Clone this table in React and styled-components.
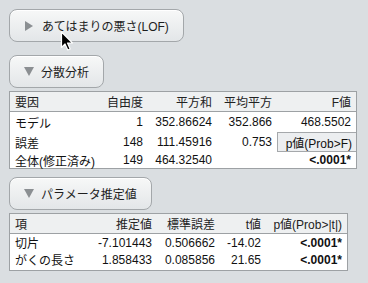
import React from 'react'
import styled, { createGlobalStyle } from 'styled-components'

const GlobalStyle = createGlobalStyle`
  body {
    margin: 0;
    background: #dadee1;
    font-family: "Liberation Sans", "Noto Sans CJK JP", sans-serif;
  }
`

const Page = styled.div`
  position: relative;
  width: 368px;
  height: 283px;
  padding: 9px;
  box-sizing: border-box;
  display: flex;
  flex-direction: column;
  align-items: flex-start;
`

const Disclosure = styled.div`
  width: ${(props) => props.$width}px;
  height: 33px;
  box-sizing: border-box;
  margin-top: ${(props) => props.$top || 0}px;
  border: 1px solid #a3a7aa;
  border-radius: 8px;
  background: linear-gradient(#f7f8f8, #e3e6e8);
  box-shadow: inset 0 1px 0 #ffffff;
  display: flex;
  align-items: center;
  padding-left: 14px;
  font-size: 12px;
  color: #1e1e1e;
`

// gray disclosure triangle, pointing right when closed and down when open
const Arrow = styled.span`
  width: 0;
  height: 0;
  margin-right: ${(props) => (props.$open ? '7px' : '9px')};
  border-style: solid;
  border-color: transparent;
  ${(props) =>
    props.$open
      ? `
    border-width: 9px 5px 0 5px;
    border-top-color: #8b8f92;
  `
      : `
    margin-left: 1px;
    border-width: 5px 0 5px 8px;
    border-left-color: #8b8f92;
  `}
`

const Table = styled.div`
  display: grid;
  grid-template-columns: ${(props) => props.$cols};
  grid-template-rows: ${(props) => props.$rows};
  margin-top: 3px;
  margin-bottom: ${(props) => props.$after || 0}px;
  padding-bottom: ${(props) => props.$pad || 0}px;
  border: 1px solid #9da1a4;
  background: #ffffff;
  font-size: 12px;
  color: #111;
`

const Cell = styled.div`
  display: flex;
  align-items: center;
  justify-content: ${(props) => (props.$left ? 'flex-start' : 'flex-end')};
  padding: ${(props) => (props.$left ? '0 0 0 5px' : '0 5px 0 0')};
  font-weight: ${(props) => (props.$bold ? 'bold' : 'normal')};
  white-space: nowrap;
  box-sizing: border-box;
`

const HeadCell = styled(Cell)`
  background: #eef0f1;
  border-bottom: 1px solid #9da1a4;
  color: #222;
`

const ButtonCell = styled(Cell)`
  background: #eceef0;
  border: 1px solid #a5a8ab;
  border-right: none;
  padding-right: 4px;
`

const Cursor = styled.svg`
  position: absolute;
  left: 60px;
  top: 31px;
`

const anovaRows = [
  ['モデル', '1', '352.86624', '352.866', '468.5502'],
  ['誤差', '148', '111.45916', '0.753', null],
  ['全体(修正済み)', '149', '464.32540', '', '<.0001*'],
]

const paramRows = [
  ['切片', '-7.101443', '0.506662', '-14.02', '<.0001*'],
  ['がくの長さ', '1.858433', '0.085856', '21.65', '<.0001*'],
]

const App = () => (
  <Page>
    <GlobalStyle />
    <Disclosure $width={175}>
      <Arrow />
      あてはまりの悪さ(LOF)
    </Disclosure>

    <Disclosure $width={95} $top={13}>
      <Arrow $open />
      分散分析
    </Disclosure>
    <Table $cols="90px 48px 69px 60px 79px" $rows="20px 20px 20px 16px" $after={8}>
      <HeadCell $left>要因</HeadCell>
      <HeadCell>自由度</HeadCell>
      <HeadCell>平方和</HeadCell>
      <HeadCell>平均平方</HeadCell>
      <HeadCell>F値</HeadCell>
      {anovaRows.map((row) =>
        row.map((value, i) => {
          if (i === 4 && value === null) {
            return <ButtonCell key={row[0] + i}>p値(Prob&gt;F)</ButtonCell>
          }
          return (
            <Cell key={row[0] + i} $left={i === 0} $bold={value && value.startsWith('<')}>
              {value}
            </Cell>
          )
        })
      )}
    </Table>

    <Disclosure $width={143}>
      <Arrow $open />
      パラメータ推定値
    </Disclosure>
    <Table $cols="80px 67px 63px 46px 81px" $rows="20px 17px 17px" $pad={2}>
      <HeadCell $left>項</HeadCell>
      <HeadCell>推定値</HeadCell>
      <HeadCell>標準誤差</HeadCell>
      <HeadCell>t値</HeadCell>
      <HeadCell>p値(Prob&gt;|t|)</HeadCell>
      {paramRows.map((row) =>
        row.map((value, i) => (
          <Cell key={row[0] + i} $left={i === 0} $bold={i === 4}>
            {value}
          </Cell>
        ))
      )}
    </Table>

    <Cursor width="15" height="21" viewBox="0 0 15 21">
      <path
        d="M1.5 1 L1.5 16.5 L5 13 L7.8 19 L10.2 18 L7.5 12 L12.5 12 Z"
        fill="#000"
        stroke="#fff"
        strokeWidth="1.2"
        strokeLinejoin="round"
      />
    </Cursor>
  </Page>
)

export default App
